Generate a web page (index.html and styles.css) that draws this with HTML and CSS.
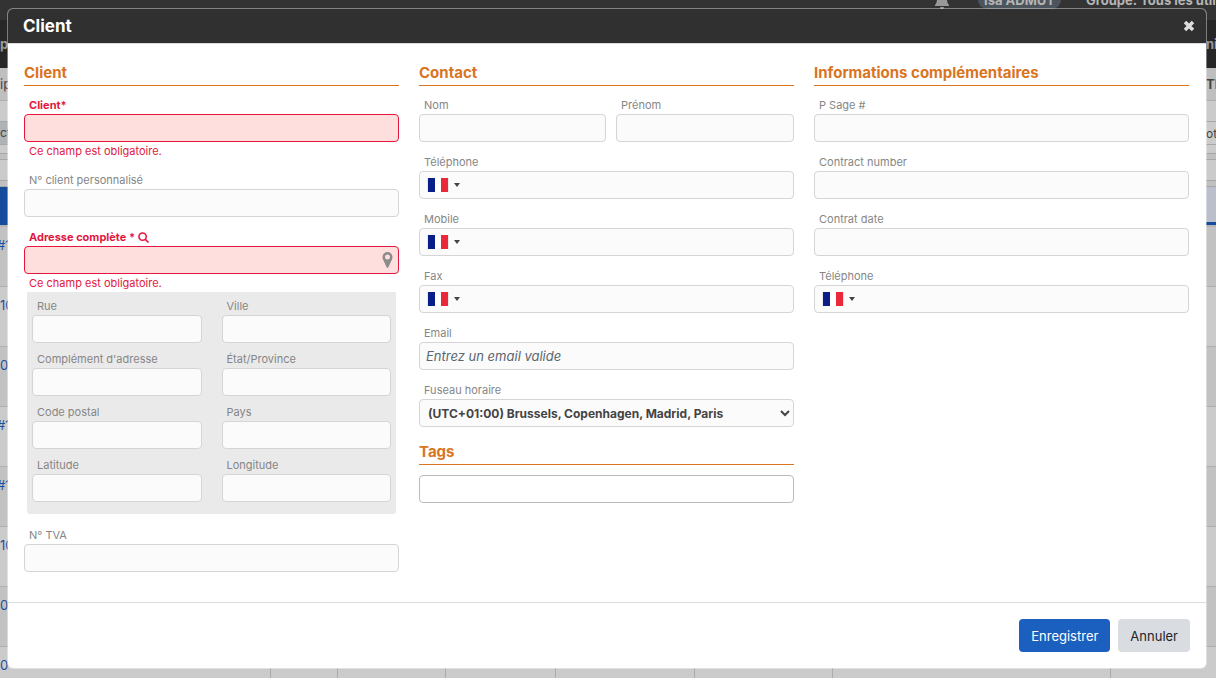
FILE: index.html
```html
<!doctype html>
<html lang="fr">
<head>
    <meta charset="UTF-8">
    <meta name="viewport" content="width=device-width, initial-scale=1.0">
    <title>Client</title>
    <link rel="stylesheet" href="styles.css">
</head>
<body>
<div class="page">
    <div class="topbar">
        <svg class="bell" viewBox="0 0 14 16"><path d="M6 1a1 1 0 0 1 2 0c2.500.5 4 2.300 4 5 0 3 .8 4.500 2 6v1H0v-1c1.200-1.500 2-3 2-6 0-2.700 1.500-4.500 4-5zM5 14h4a2 2 0 0 1-4 0z"/></svg>
        <span class="user">Isa ADMUT</span>
        <span class="group">Groupe: Tous les utilisateurs</span>
    </div>
    <div class="nav"><span>p</span><span class="edge">ni</span></div>
    <div class="toolbar"><span>ip</span><b class="edge">TE</b></div>
    <div class="strip"></div>
    <div class="filter"><span class="action">cti</span><span class="edge">ot</span></div>
    <div class="strip small"></div>
    <div class="line"></div>
    <div class="strip"></div>
    <div class="line"></div>
    <div class="tabs"><span class="tab-active"></span><span class="tab-head"></span></div>
    <div class="row"><a class="ticket" href="#">#12</a></div>
    <div class="row"><a href="#">10</a></div>
    <div class="row"><a href="#">00</a></div>
    <div class="row"><a class="ticket" href="#">#1</a></div>
    <div class="row"><a class="ticket" href="#">#1</a></div>
    <div class="row"><a href="#">10</a></div>
    <div class="row"><a href="#">00</a></div>
    <div class="row last">
        <a class="cell" href="#">0</a>
        <span class="cell"></span>
        <span class="cell"></span>
        <span class="cell"></span>
        <span class="cell"></span>
        <span class="cell"></span>
        <span class="cell"></span>
        <span class="cell"></span>
    </div>
</div>

<div class="overlay">
    <form class="modal" role="dialog" aria-labelledby="modalTitle">
        <div class="modal-header">
            <h1 id="modalTitle">Client</h1>
            <button class="close" type="button" aria-label="Fermer">
                <svg viewBox="0 0 12 12"><path d="M2 2l8 8M10 2l-8 8"/></svg>
            </button>
        </div>
        <div class="modal-body">
            <div class="column">
                <h2>Client</h2>
                <div class="field error">
                    <label for="client">Client*</label>
                    <input id="client" type="text">
                    <p class="message">Ce champ est obligatoire.</p>
                </div>
                <div class="field">
                    <label for="numero">N° client personnalisé</label>
                    <input id="numero" type="text">
                </div>
                <div class="field error">
                    <label for="adresse">Adresse complète * <svg class="search" viewBox="0 0 12 12"><circle cx="5" cy="5" r="4"/><path d="M8 8l3.500 3.500"/></svg></label>
                    <div class="input-wrap">
                        <input id="adresse" type="text">
                        <svg class="pin" viewBox="0 0 10 16"><path fill-rule="evenodd" d="M5 0a5 5 0 0 1 5 5c0 1.500-.5 2.500-1 3.600L5.900 15.300q-.9 1.200-1.800 0L1 8.600C.5 7.500 0 6.500 0 5a5 5 0 0 1 5-5zM5 2.500a2.500 2.500 0 1 0 0 5 2.500 2.500 0 0 0 0-5z"/></svg>
                    </div>
                    <p class="message">Ce champ est obligatoire.</p>
                </div>
                <div class="address">
                    <div class="field"><label for="rue">Rue</label><input id="rue" type="text"></div>
                    <div class="field"><label for="ville">Ville</label><input id="ville" type="text"></div>
                    <div class="field"><label for="complement">Complément d'adresse</label><input id="complement" type="text"></div>
                    <div class="field"><label for="etat">État/Province</label><input id="etat" type="text"></div>
                    <div class="field"><label for="cp">Code postal</label><input id="cp" type="text"></div>
                    <div class="field"><label for="pays">Pays</label><input id="pays" type="text"></div>
                    <div class="field"><label for="latitude">Latitude</label><input id="latitude" type="text"></div>
                    <div class="field"><label for="longitude">Longitude</label><input id="longitude" type="text"></div>
                </div>
                <div class="field">
                    <label for="tva">N° TVA</label>
                    <input id="tva" type="text">
                </div>
            </div>

            <div class="column">
                <h2>Contact</h2>
                <div class="names">
                    <div class="field"><label for="nom">Nom</label><input id="nom" type="text"></div>
                    <div class="field"><label for="prenom">Prénom</label><input id="prenom" type="text"></div>
                </div>
                <div class="field">
                    <label for="telephone">Téléphone</label>
                    <div class="input-wrap">
                        <input id="telephone" class="phone" type="tel">
                        <button class="country" type="button" aria-label="France"><span class="flag"></span><span class="caret"></span></button>
                    </div>
                </div>
                <div class="field">
                    <label for="mobile">Mobile</label>
                    <div class="input-wrap">
                        <input id="mobile" class="phone" type="tel">
                        <button class="country" type="button" aria-label="France"><span class="flag"></span><span class="caret"></span></button>
                    </div>
                </div>
                <div class="field">
                    <label for="fax">Fax</label>
                    <div class="input-wrap">
                        <input id="fax" class="phone" type="tel">
                        <button class="country" type="button" aria-label="France"><span class="flag"></span><span class="caret"></span></button>
                    </div>
                </div>
                <div class="field">
                    <label for="email">Email</label>
                    <input id="email" type="email" placeholder="Entrez un email valide">
                </div>
                <div class="field">
                    <label for="fuseau">Fuseau horaire</label>
                    <div class="input-wrap">
                        <select id="fuseau">
                            <option>(UTC+01:00) Brussels, Copenhagen, Madrid, Paris</option>
                        </select>
                        <svg class="chevron" viewBox="0 0 10 7"><path d="M1 1l4 4 4-4"/></svg>
                    </div>
                </div>
                <h2 class="tags-title" id="tagsTitle">Tags</h2>
                <input class="tags" type="text" aria-labelledby="tagsTitle">
            </div>

            <div class="column">
                <h2>Informations complémentaires</h2>
                <div class="field">
                    <label for="sage">P Sage #</label>
                    <input id="sage" type="text">
                </div>
                <div class="field">
                    <label for="contract">Contract number</label>
                    <input id="contract" type="text">
                </div>
                <div class="field">
                    <label for="date">Contrat date</label>
                    <input id="date" type="text">
                </div>
                <div class="field">
                    <label for="telephone2">Téléphone</label>
                    <div class="input-wrap">
                        <input id="telephone2" class="phone" type="tel">
                        <button class="country" type="button" aria-label="France"><span class="flag"></span><span class="caret"></span></button>
                    </div>
                </div>
            </div>
        </div>
        <div class="modal-footer">
            <button class="btn primary" type="submit">Enregistrer</button>
            <button class="btn" type="button">Annuler</button>
        </div>
    </form>
</div>
</body>
</html>
```
FILE: styles.css
```css
* {
    box-sizing: border-box;
}
body {
    margin: 0;
    font-family: Inter, "Liberation Sans", sans-serif;
    font-size: 13px;
    color: #444;
}
h1, h2, p {
    margin: 0;
}
button {
    font-family: inherit;
    cursor: pointer;
}

/* page behind the dialog */
.page {
    height: 100vh;
    overflow: hidden;
    background: #cbcbcb;
}
.topbar {
    display: flex;
    align-items: flex-end;
    justify-content: flex-end;
    height: 20px;
    padding-bottom: 11px;
    background: #333;
    color: #b5b5b5;
    font-weight: 700;
    line-height: 18px;
    white-space: nowrap;
}
.bell {
    width: 14px;
    height: 16px;
    margin-right: 29px;
    fill: #999;
}
.user {
    width: 83px;
    margin-right: 25px;
    border-radius: 9px;
    background: #4d555c;
    text-align: center;
}
.group {
    width: 130px;
    overflow: hidden;
}
.nav, .toolbar, .filter {
    display: flex;
    align-items: center;
    justify-content: space-between;
}
.edge {
    width: 10px;
    white-space: nowrap;
}
.nav {
    height: 48px;
    background: #272727;
    color: #999;
    font-weight: 700;
}
.toolbar {
    height: 33px;
    border-bottom: 1px solid #adadad;
    background: #bfbfbf;
}
.strip {
    height: 20px;
}
.strip.small {
    height: 8px;
}
.filter {
    height: 24px;
    border: solid #a4a8ab;
    border-width: 1px 0;
    font-size: 12px;
}
.action {
    width: 50px;
    background: #adb3b6;
    line-height: 22px;
}
.line {
    height: 7px;
    border: solid #a4a6a8;
    border-width: 1px 0;
    background: #c0c0c0;
}
.tabs {
    display: flex;
    justify-content: space-between;
    height: 40px;
    border-bottom: 2px solid #b5b5b5;
}
.tab-active {
    width: 50px;
    background: #164c9c;
}
.tab-head {
    width: 50px;
    border-bottom: 3px solid #164c9c;
    background: #babfcb;
}
.row {
    height: 60px;
    padding-top: 10px;
    border-bottom: 1px solid #adb0b2;
    line-height: 16px;
}
.row:nth-child(odd) {
    background: #c2c2c2;
}
.row a {
    color: #1c4f9c;
    text-decoration: none;
}
.row .ticket {
    margin-left: -3px;
}
.row.last {
    display: grid;
    grid-template-columns: 271fr 67fr 108fr 110fr 139fr 138fr 278fr 105fr;
    padding: 0;
}
.cell {
    padding-top: 10px;
    border-right: 1px solid #a9abad;
}
.cell:last-child {
    border-right: none;
}

/* dialog */
.overlay {
    position: absolute;
    inset: 0;
    padding: 8px 9px 9px 7px;
}
.modal {
    border: 1px solid rgba(255, 255, 255, .4);
    border-radius: 6px;
    background: #fff;
    background-clip: padding-box;
}
.modal-header {
    display: flex;
    align-items: center;
    justify-content: space-between;
    height: 35px;
    padding: 0 11px 0 15px;
    border-bottom: 1px solid #d9dde1;
    border-radius: 5px 5px 0 0;
    background: #303030;
    color: #fff;
}
.modal-header h1 {
    font-size: 17px;
    line-height: 20px;
}
.close {
    display: flex;
    padding: 0;
    border: none;
    background: none;
}
.close svg {
    width: 12px;
    height: 12px;
    fill: none;
    stroke: #ddd;
    stroke-width: 3.500;
}
.modal-body {
    display: grid;
    grid-template-columns: repeat(3, minmax(0, 1fr));
    gap: 20px;
    padding: 19px 17px 30px 16px;
}
h2 {
    margin-bottom: 11px;
    padding-bottom: 2px;
    border-bottom: 1px solid #d9741f;
    color: #d9741f;
    font-size: 15px;
    line-height: 20px;
}
.field {
    margin-bottom: 12px;
}
.field:last-child {
    margin-bottom: 0;
}
label {
    display: block;
    margin-bottom: 1px;
    padding-left: 5px;
    color: #868686;
    font-size: 11px;
    line-height: 16px;
}
input, select {
    display: block;
    width: 100%;
    height: 28px;
    padding: 0 6px;
    border: 1px solid #d5d5d5;
    border-radius: 4px;
    background: #fbfbfb;
    color: #444;
    font-family: inherit;
    font-size: 13px;
}
input::placeholder {
    color: #5c666e;
    font-style: italic;
}
.input-wrap {
    position: relative;
}
.error label {
    color: #e3173e;
    font-weight: 700;
}
.error input {
    border-color: #e3173e;
    background: #ffdfdd;
}
.message {
    padding: 1px 0 0 5px;
    color: #e3173e;
    font-size: 11px;
    line-height: 17px;
}
.search {
    width: 11px;
    height: 11px;
    vertical-align: -2px;
    fill: none;
    stroke: #e3173e;
    stroke-width: 1.700;
}
.pin {
    position: absolute;
    top: 6px;
    right: 6px;
    width: 11px;
    height: 16px;
    fill: #8c8c8c;
}
.address {
    display: grid;
    grid-template-columns: 1fr 1fr;
    gap: 8px 20px;
    margin: -12px 3px 13px;
    padding: 6px 5px 12px;
    border-radius: 0 0 3px 3px;
    background: #eaeaea;
}
.address .field, .names .field {
    margin-bottom: 0;
}
.names {
    display: grid;
    grid-template-columns: 187fr 178fr;
    gap: 10px;
    margin-bottom: 12px;
}
.phone {
    padding-left: 48px;
}
.country {
    position: absolute;
    top: 0;
    left: 0;
    display: flex;
    align-items: center;
    gap: 5px;
    height: 28px;
    padding: 0 8px;
    border: none;
    background: none;
}
.flag {
    width: 22px;
    height: 14px;
    border: solid #e8e8e8;
    border-width: 0 1px;
    background: linear-gradient(90deg, #091e89 0 7px, #fff 7px 13px, #ea2839 13px);
}
.caret {
    border: 3px solid transparent;
    border-top: 4px solid #444;
    border-bottom: none;
}
select {
    padding: 0 24px 0 8px;
    appearance: none;
    font-weight: 700;
    font-size: 12px;
}
.chevron {
    position: absolute;
    top: 11px;
    right: 4px;
    width: 10px;
    height: 7px;
    fill: none;
    stroke: #444;
    stroke-width: 2;
    pointer-events: none;
}
.tags-title {
    margin: 15px 0 10px;
}
.column .field:has(+ .tags-title) {
    margin-bottom: 0;
}
.tags {
    border-color: #bbb;
    background: #fff;
}
.modal-footer {
    display: flex;
    justify-content: flex-end;
    gap: 8px;
    padding: 16px;
    border-top: 1px solid #d9dde1;
}
.btn {
    height: 33px;
    padding: 0 12px;
    border: none;
    border-radius: 4px;
    background: #d9dde1;
    color: #212529;
    font-size: 13px;
}
.btn.primary {
    background: #1b5fbf;
    color: #fff;
}
```
